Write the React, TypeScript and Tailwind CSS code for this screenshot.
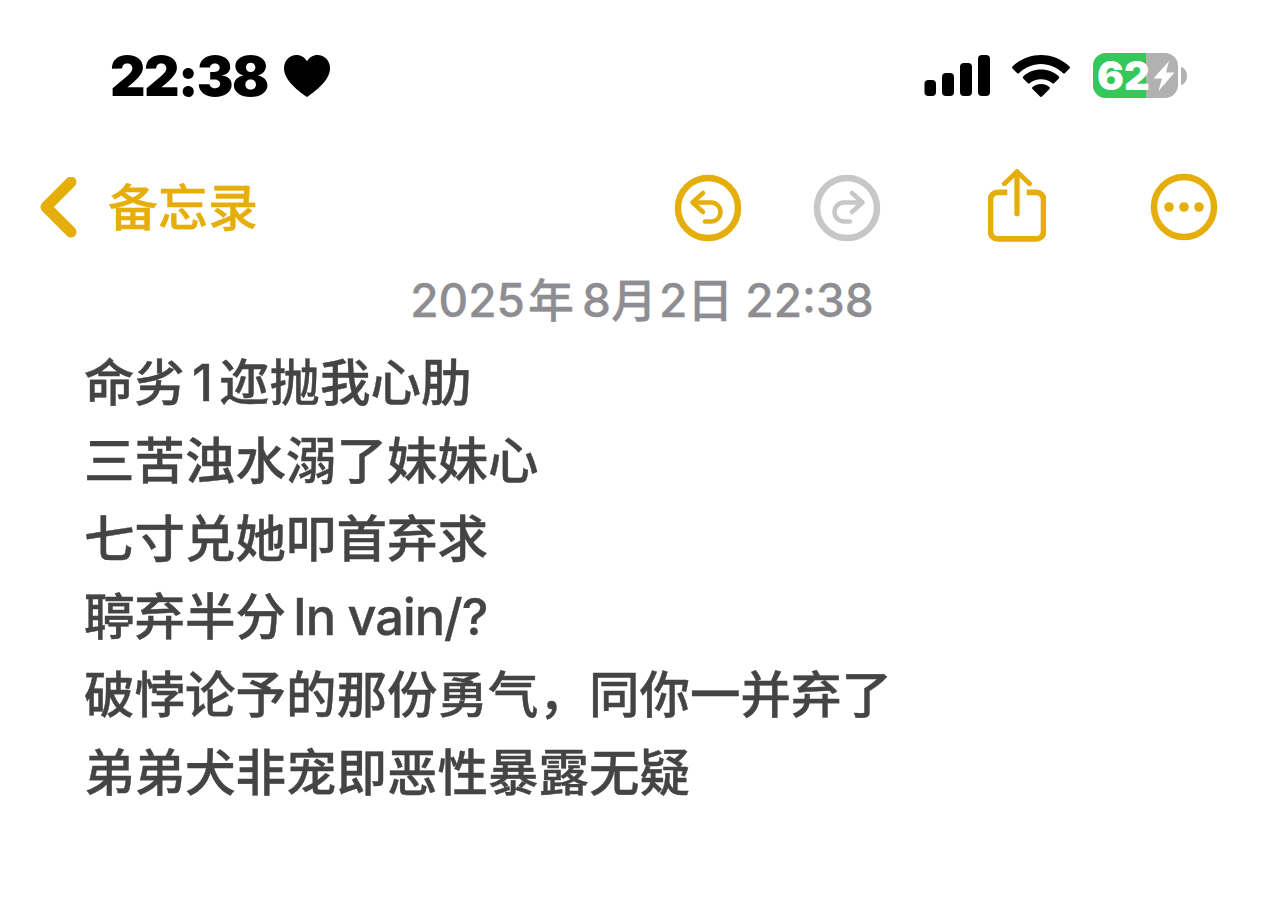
const GOLD = "#e5ae0a";

const bodyLines = [
  <>命劣<span className="ml-[7px] mr-[6px]">1</span>迩抛我心肋</>,
  <>三苦浊水溺了妹妹心</>,
  <>七寸兑她叩首弃求</>,
  <>聤弃半分<span className="ml-[7px] tracking-[-1px]">In vain/?</span></>,
  <>破悖论予的那份勇气，同你一并弃了</>,
  <>弟弟犬非宠即恶性暴露无疑</>,
];

function Signal() {
  return (
    <svg width="66" height="42" viewBox="0 0 66 42" fill="#000">
      <rect x="0.500" y="25" width="11.500" height="16" rx="4" />
      <rect x="18" y="18" width="12" height="23" rx="4" />
      <rect x="36" y="8" width="12" height="33" rx="4" />
      <rect x="54" y="0" width="12" height="41" rx="4" />
    </svg>
  );
}

function Wifi() {
  return (
    <svg width="58" height="42" viewBox="0 0 58 42" fill="#000">
      <path d="M29 0C18 0 8 4.300 0.500 11.500a1.500 1.500 0 0 0 0 2l4.500 4.600a1.500 1.500 0 0 0 2.100 0C13 12.500 20.600 9 29 9s16 3.500 21.900 9.100a1.500 1.500 0 0 0 2.100 0l4.500-4.600a1.500 1.500 0 0 0 0-2C50 4.300 40 0 29 0Z" />
      <path d="M29 14.500c-6.900 0-13.100 2.600-17.800 6.900a1.500 1.500 0 0 0 0 2.100l4.500 4.600a1.500 1.500 0 0 0 2 0.100c3-2.500 7-4 11.300-4s8.300 1.500 11.300 4a1.500 1.500 0 0 0 2-0.100l4.500-4.600a1.500 1.500 0 0 0 0-2.100C42.100 17.100 35.900 14.500 29 14.500Z" />
      <path d="M29 29c-3.200 0-6.100 1.100-8.400 3a1.300 1.300 0 0 0-0.100 1.900l7.500 7.600a1.400 1.400 0 0 0 2 0l7.500-7.600a1.300 1.300 0 0 0-0.100-1.900C35.100 30.100 32.200 29 29 29Z" />
    </svg>
  );
}

function Battery() {
  return (
    <div className="mb-[1px] flex items-center">
      <div className="relative flex h-[45px] w-[85px] rounded-[13px] bg-[#b1b1b1]">
        <div className="h-full w-[53px] rounded-l-[13px] bg-[#34c759]" />
        <span className="absolute left-[4px] top-0 font-['Inter'] text-[40px] font-black leading-[45px] text-white">
          62
        </span>
        <svg className="absolute left-[60px] top-[8px]" width="22" height="30" viewBox="0 0 22 30" fill="#fff">
          <path d="M16 0 0.500 17.500H9L5.500 30 21.500 11.500H13L16 0Z" />
        </svg>
      </div>
      <svg className="ml-[3px]" width="6" height="18" viewBox="0 0 6 18" fill="#b1b1b1">
        <path d="M0 0c3.500 0.800 6 4.500 6 9s-2.500 8.200-6 9Z" />
      </svg>
    </div>
  );
}

function Undo({ color, flip }: { color: string; flip?: boolean }) {
  return (
    <svg width="68" height="68" viewBox="0 0 68 68" fill="none" stroke={color} strokeLinecap="round" strokeLinejoin="round">
      <circle cx="34" cy="34" r="30" strokeWidth="6.500" />
      <g strokeWidth="4.500" transform={flip ? "matrix(-1 0 0 1 68 0)" : undefined}>
        <path d="M29 19 18.500 28.500 29 38" />
        <path d="M19 28.500h18a9.500 9.500 0 0 1 0 19H31" />
      </g>
    </svg>
  );
}

function Share() {
  return (
    <svg className="mb-[6px]" width="58" height="74" viewBox="0 0 60 76" fill="none" stroke={GOLD} strokeLinecap="round" strokeLinejoin="round">
      <path d="M20 25H10a7.500 7.500 0 0 0-7.500 7.500v33A7.500 7.500 0 0 0 10 73h40a7.500 7.500 0 0 0 7.500-7.500v-33A7.500 7.500 0 0 0 50 25H40" strokeWidth="6" strokeLinecap="butt" />
      <path d="M30 47V4" strokeWidth="5.500" />
      <path d="M17 16 30 3.500 43 16" strokeWidth="5" />
    </svg>
  );
}

function More() {
  return (
    <svg className="mb-[2px]" width="68" height="68" viewBox="0 0 68 68" fill="none">
      <circle cx="34" cy="34" r="30" stroke={GOLD} strokeWidth="6.500" />
      <circle cx="19" cy="34" r="4.800" fill={GOLD} />
      <circle cx="34" cy="34" r="4.800" fill={GOLD} />
      <circle cx="49" cy="34" r="4.800" fill={GOLD} />
    </svg>
  );
}

export default function App() {
  return (
    <div className="h-[917px] w-[1284px] overflow-hidden bg-white font-['Inter','Noto_Sans_CJK_SC',sans-serif]">
      <div className="mt-[46px] flex h-[60px] items-center pl-[110px] pr-[97px]">
        <span className="text-[55px] font-black leading-[60px] tracking-[-1.6px] text-black">22:38</span>
        <svg className="ml-[16px]" width="46" height="42" viewBox="0 0 46 42" fill="#000">
          <path d="M23 42C20 39.500 0 27.500 0 13.200 0 5.500 5.500 0 12.500 0 17 0 20.800 2.400 23 6.300 25.200 2.400 29 0 33.500 0 40.500 0 46 5.500 46 13.200 46 27.500 26 39.500 23 42Z" />
        </svg>
        <div className="ml-auto flex items-center">
          <Signal />
          <div className="ml-[22px]"><Wifi /></div>
          <div className="ml-[23px]"><Battery /></div>
        </div>
      </div>

      <div className="mt-[60px] flex h-[84px] items-center pl-[40px] pr-[66px]">
        <svg width="38" height="62" viewBox="0 0 38 62" fill="none" stroke={GOLD} strokeWidth="11" strokeLinecap="round" strokeLinejoin="round">
          <path d="M31 5 6 30l25 25" />
        </svg>
        <span className="ml-[30px] text-[50px] font-medium leading-[60px] text-[#e5ae0a] [-webkit-text-stroke:0.35px_#e5ae0a]">备忘录</span>
        <div className="ml-auto flex items-center">
          <Undo color={GOLD} />
          <div className="ml-[71px]"><Undo color="#c7c7c9" flip /></div>
          <div className="ml-[107px]"><Share /></div>
          <div className="ml-[104px]"><More /></div>
        </div>
      </div>

      <div className="mt-[24px] text-center text-[46px] font-medium leading-[52px] text-[#8e8e92] [-webkit-text-stroke:0.3px_#8e8e92]">
        2025<span className="ml-[3px] mr-[8px]">年</span>8月<span className="ml-[2px]">2</span>日<span className="ml-[12px]">22:38</span>
      </div>

      <div className="mt-[18px] pl-[84px] text-[50.5px] font-medium leading-[78px] text-[#444444] [-webkit-text-stroke:0.4px_#444444]">
        {bodyLines.map((l, i) => (
          <div key={i}>{l}</div>
        ))}
      </div>
    </div>
  );
}
